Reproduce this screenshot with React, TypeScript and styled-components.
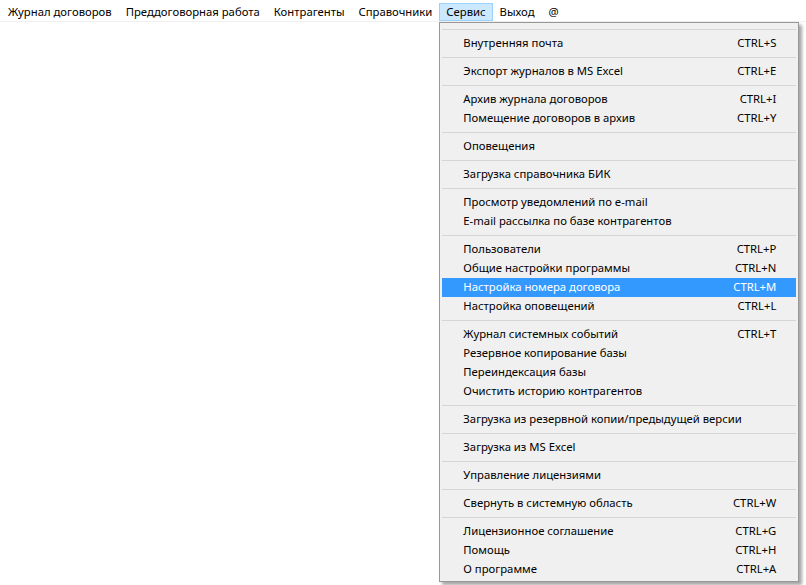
import React from "react";
import styled, { createGlobalStyle } from "styled-components";

const Global = createGlobalStyle`
  html, body { margin: 0; padding: 0; background: #ffffff; }
  body {
    font-family: "Noto Sans", "Open Sans", Arial, sans-serif;
    font-size: 11.3px;
    color: #000;
  }
`;

const Page = styled.div`
  width: 806px;
  height: 585px;
  background: #fff;
`;

const MenuBar = styled.div`
  display: flex;
  align-items: flex-start;
  height: 21px;
  padding-left: 1px;
  border-bottom: 1px solid #f0f0f0;
  background: #fff;
`;

const BarItem = styled.div<{ $active?: boolean }>`
  position: relative;
  margin-top: 3px;
  height: 16px;
  line-height: 16px;
  padding: 0 6px;
  border: 1px solid ${(p) => (p.$active ? "#99d1ff" : "transparent")};
  background: ${(p) => (p.$active ? "#cce8ff" : "transparent")};
  white-space: nowrap;
  cursor: default;
`;

const Dropdown = styled.div`
  position: absolute;
  left: -1px;
  top: calc(100% + 2px);
  width: 354px;
  padding: 2px;
  background: #f0f0f0;
  border: 1px solid #979797;
  box-shadow: 3px 3px 3px rgba(0, 0, 0, 0.35);
  z-index: 10;
`;

const Item = styled.div<{ $hot?: boolean }>`
  display: grid;
  grid-template-columns: 1fr auto;
  align-items: start;
  box-sizing: border-box;
  height: 19px;
  line-height: 18px;
  padding: 0 20px 1px 21px;
  background: ${(p) => (p.$hot ? "#3399ff" : "transparent")};
  color: ${(p) => (p.$hot ? "#ffffff" : "#000000")};
  white-space: nowrap;
`;

const Shortcut = styled.span`
  text-align: right;
`;

const Separator = styled.div`
  height: 9px;
  display: flex;
  align-items: center;
  &::after {
    content: "";
    display: block;
    width: 100%;
    height: 1px;
    background: #d5d5d5;
  }
`;

type Entry = { label: string; key?: string; hot?: boolean } | "sep";

const entries: Entry[] = [
  "sep",
  { label: "Внутренняя почта", key: "CTRL+S" },
  "sep",
  { label: "Экспорт журналов в MS Excel", key: "CTRL+E" },
  "sep",
  { label: "Архив журнала договоров", key: "CTRL+I" },
  { label: "Помещение договоров в архив", key: "CTRL+Y" },
  "sep",
  { label: "Оповещения" },
  "sep",
  { label: "Загрузка справочника БИК" },
  "sep",
  { label: "Просмотр уведомлений по e-mail" },
  { label: "E-mail рассылка по базе контрагентов" },
  "sep",
  { label: "Пользователи", key: "CTRL+P" },
  { label: "Общие настройки программы", key: "CTRL+N" },
  { label: "Настройка номера договора", key: "CTRL+M", hot: true },
  { label: "Настройка оповещений", key: "CTRL+L" },
  "sep",
  { label: "Журнал системных событий", key: "CTRL+T" },
  { label: "Резервное копирование базы" },
  { label: "Переиндексация базы" },
  { label: "Очистить историю контрагентов" },
  "sep",
  { label: "Загрузка из резервной копии/предыдущей версии" },
  "sep",
  { label: "Загрузка из MS Excel" },
  "sep",
  { label: "Управление лицензиями" },
  "sep",
  { label: "Свернуть в системную область", key: "CTRL+W" },
  "sep",
  { label: "Лицензионное соглашение", key: "CTRL+G" },
  { label: "Помощь", key: "CTRL+H" },
  { label: "О программе", key: "CTRL+A" },
];

const barItems = [
  "Журнал договоров",
  "Преддоговорная работа",
  "Контрагенты",
  "Справочники",
  "Сервис",
  "Выход",
  "@",
];

export default function App() {
  return (
    <Page>
      <Global />
      <MenuBar>
        {barItems.map((t) => (
          <BarItem key={t} $active={t === "Сервис"}>
            {t}
            {t === "Сервис" && (
              <Dropdown>
                {entries.map((e, i) =>
                  e === "sep" ? (
                    <Separator key={i} />
                  ) : (
                    <Item key={i} $hot={e.hot}>
                      <span>{e.label}</span>
                      <Shortcut>{e.key ?? ""}</Shortcut>
                    </Item>
                  )
                )}
              </Dropdown>
            )}
          </BarItem>
        ))}
      </MenuBar>
    </Page>
  );
}
